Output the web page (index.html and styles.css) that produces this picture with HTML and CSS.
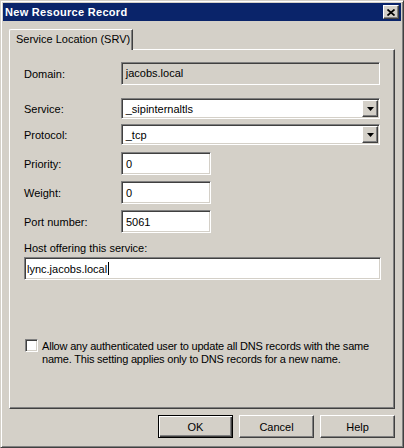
FILE: index.html
```html
<!DOCTYPE html>
<html>
<head>
    <title>New Resource Record</title>
    <link rel="stylesheet" href="styles.css">
</head>
<body>
    <div class="window">
        <div class="titlebar">
            <span class="title">New Resource Record</span>
            <div class="close">
                <svg width="8" height="7" viewBox="0 0 8 7">
                    <path d="M0.5 0.5 L7.5 6.5 M7.5 0.5 L0.5 6.5" stroke="#000" stroke-width="1.7" fill="none"/>
                </svg>
            </div>
        </div>

        <div class="tabs">
            <div class="tab">Service Location (SRV)</div>
        </div>

        <div class="panel">
            <div class="row row-domain">
                <span class="label">Domain:</span>
                <div class="field field-wide field-disabled">jacobs.local</div>
            </div>

            <div class="row row-service">
                <span class="label">Service:</span>
                <div class="field select field-wide">
                    <span>_sipinternaltls</span>
                    <div class="drop">
                        <svg width="7" height="4" viewBox="0 0 7 4"><polygon points="0,0 7,0 3.5,4" fill="#000"/></svg>
                    </div>
                </div>
            </div>

            <div class="row row-protocol">
                <span class="label">Protocol:</span>
                <div class="field select field-wide">
                    <span>_tcp</span>
                    <div class="drop">
                        <svg width="7" height="4" viewBox="0 0 7 4"><polygon points="0,0 7,0 3.5,4" fill="#000"/></svg>
                    </div>
                </div>
            </div>

            <div class="row row-priority">
                <span class="label">Priority:</span>
                <div class="field field-short">0</div>
            </div>

            <div class="row row-num">
                <span class="label">Weight:</span>
                <div class="field field-short">0</div>
            </div>

            <div class="row row-num">
                <span class="label">Port number:</span>
                <div class="field field-short">5061</div>
            </div>

            <div class="host-label">Host offering this service:</div>
            <div class="field field-host">lync.jacobs.local<span class="caret"></span></div>

            <div class="check-row">
                <div class="check"></div>
                <div class="check-text">Allow any authenticated user to update all DNS records with the same<br>name. This setting applies only to DNS records for a new name.</div>
            </div>
        </div>

        <div class="buttons">
            <div class="btn btn-default">OK</div>
            <div class="btn">Cancel</div>
            <div class="btn">Help</div>
        </div>
    </div>
</body>
</html>
```

FILE: styles.css
```css
* {
    box-sizing: border-box;
}
body {
    margin: 0;
    font-family: "Liberation Sans", Arial, sans-serif;
    font-size: 11px;
    color: #000;
    background-color: #d4d0c8;
}
.window {
    width: 404px;
    height: 448px;
    padding: 2px;
    border: 1px solid;
    border-color: #d4d0c8 #404040 #404040 #d4d0c8;
    box-shadow: inset 1px 1px #fff, inset -1px -1px #808080;
    background-color: #d4d0c8;
    display: flex;
    flex-direction: column;
}
.titlebar {
    height: 18px;
    background-color: #0a246a;
    display: flex;
    align-items: center;
    justify-content: space-between;
    padding: 0 2px;
}
.title {
    color: #fff;
    font-weight: bold;
    letter-spacing: 0.3px;
}
.close {
    width: 16px;
    height: 14px;
    background-color: #d4d0c8;
    border: 1px solid;
    border-color: #fff #404040 #404040 #fff;
    box-shadow: inset -1px -1px #808080;
    display: flex;
    align-items: center;
    justify-content: center;
}
.close svg {
    display: block;
}
.tabs {
    display: flex;
    margin: 8px 6px 0;
}
.tab {
    position: relative;
    z-index: 1;
    width: 124px;
    height: 21px;
    margin-bottom: -1px;
    padding: 0 0 2px 6px;
    background-color: #d4d0c8;
    border-top: 1px solid #fff;
    border-left: 1px solid #fff;
    border-right: 1px solid #404040;
    border-top-left-radius: 2px;
    box-shadow: inset -1px 0 #808080;
    display: flex;
    align-items: center;
}
.panel {
    height: 360px;
    margin: 0 6px;
    padding: 0 14px;
    border: 1px solid;
    border-color: #fff #404040 #404040 #fff;
    box-shadow: inset -1px -1px #808080;
}
.row {
    display: flex;
    align-items: center;
}
.label {
    width: 97px;
}
.row-domain {
    margin-top: 12px;
}
.row-service {
    margin-top: 13px;
}
.row-protocol {
    margin-top: 5px;
}
.row-priority {
    margin-top: 7px;
}
.row-num {
    margin-top: 6px;
}
.field {
    height: 23px;
    padding: 0 4px;
    background-color: #fff;
    border: 1px solid;
    border-color: #808080 #fff #fff #808080;
    box-shadow: inset 1px 1px #404040, inset -1px -1px #d4d0c8;
    display: flex;
    align-items: center;
}
.field-wide {
    width: 260px;
}
.field-short {
    width: 90px;
}
.field-disabled {
    background-color: #d4d0c8;
    padding-bottom: 2px;
}
.select {
    height: 21px;
    padding: 1px 1px 1px 4px;
    justify-content: space-between;
}
.drop {
    width: 16px;
    height: 17px;
    background-color: #d4d0c8;
    border: 1px solid;
    border-color: #fff #404040 #404040 #fff;
    box-shadow: inset -1px -1px #808080;
    display: flex;
    align-items: center;
    justify-content: center;
}
.drop svg {
    display: block;
}
.host-label {
    margin-top: 9px;
    line-height: 13px;
}
.field-host {
    width: 357px;
    margin-top: 2px;
    padding-left: 2px;
}
.caret {
    display: inline-block;
    width: 1px;
    height: 13px;
    margin-left: 1px;
    background-color: #000;
}
.check-row {
    display: flex;
    align-items: flex-start;
    margin-top: 59px;
}
.check {
    width: 13px;
    height: 13px;
    margin: 0 4px 0 1px;
    flex-shrink: 0;
    background-color: #fff;
    border: 1px solid;
    border-color: #808080 #fff #fff #808080;
    box-shadow: inset 1px 1px #404040, inset -1px -1px #d4d0c8;
}
.check-text {
    margin-top: 1px;
    line-height: 13px;
    white-space: nowrap;
    letter-spacing: -0.2px;
}
.buttons {
    display: flex;
    justify-content: flex-end;
    gap: 6px;
    margin: 6px 6px 0;
}
.btn {
    width: 75px;
    height: 23px;
    background-color: #d4d0c8;
    border: 1px solid;
    border-color: #fff #404040 #404040 #fff;
    box-shadow: inset -1px -1px #808080;
    display: flex;
    align-items: center;
    justify-content: center;
}
.btn-default {
    border-color: #000;
    box-shadow: inset 1px 1px #fff, inset -1px -1px #404040, inset -2px -2px #808080;
}
```
